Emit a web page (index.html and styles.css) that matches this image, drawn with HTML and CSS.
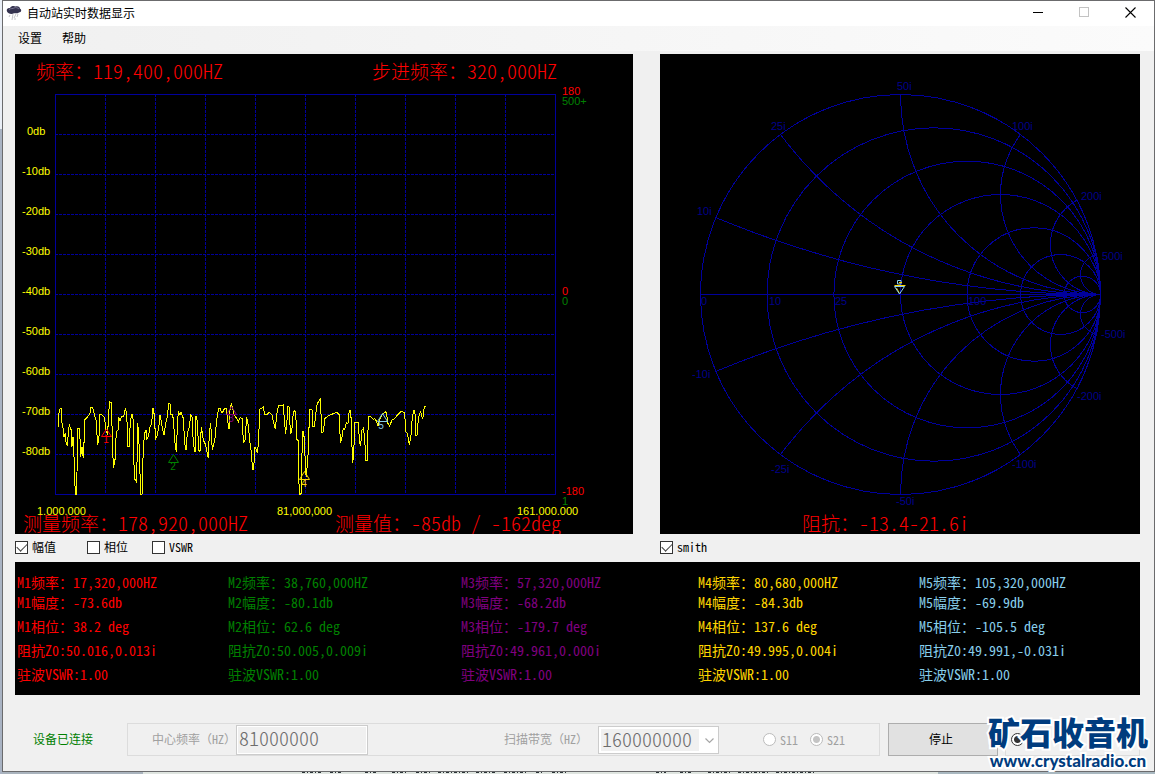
FILE: index.html
```html
<!DOCTYPE html>
<html lang="zh-CN">
<head>
<meta charset="utf-8">
<title>自动站实时数据显示</title>
<link rel="stylesheet" href="styles.css">
</head>
<body>
<main class="window">
  <header class="titlebar">
    <svg class="app-icon" width="16" height="16" viewBox="0 0 16 16" aria-hidden="true">
      <path d="M1 6.5C0 4 2 2.500 4 3C5 1 8 .6 9.500 1.600C12 .8 14 2 14 3.800C16 4.500 15.500 7.500 13 7.500C11 9 9 8 8 8.200C6 9.500 2 9 1 6.500Z" fill="#34324f"/>
      <path d="M3 4.500C5 3 7 4 8 3C10 2 12 3 13 4" fill="none" stroke="#77758f"/>
      <path d="M4 10l-1 2M7 9l-1 6M10 9l-2 4M12 9l-1 3M9 13v2" stroke="#c3c3c8" fill="none"/>
    </svg>
    <h1 class="title">自动站实时数据显示</h1>
    <div class="caption-buttons">
      <button type="button" class="caption" aria-label="最小化"><svg width="11" height="11"><path d="M0 5.500H10" stroke="#000"/></svg></button>
      <button type="button" class="caption" aria-label="最大化" disabled><svg width="11" height="11"><rect x=".5" y=".5" width="9" height="9" fill="none" stroke="#c3c3c3"/></svg></button>
      <button type="button" class="caption" aria-label="关闭"><svg width="11" height="11"><path d="M.5 .5L10.500 10.500M10.500 .5L.5 10.500" stroke="#000" stroke-width="1.100"/></svg></button>
    </div>
  </header>
  <nav class="menubar">
    <button type="button" class="menu">设置</button>
    <button type="button" class="menu">帮助</button>
  </nav>

  <div class="content">
    <section class="charts">
      <svg class="chart" viewBox="15 54 618 480" role="img" aria-label="频率响应">
        <g class="grid dashed">
          <path d="M105.500 94V494M155.500 94V494M205.500 94V494M255.500 94V494M305.500 94V494M355.500 94V494M405.500 94V494M455.500 94V494M505.500 94V494"/>
          <path d="M55 134.500H555M55 174.500H555M55 214.500H555M55 254.500H555M55 294.500H555M55 334.500H555M55 374.500H555M55 414.500H555M55 454.500H555"/>
        </g>
        <rect class="grid" x="55.500" y="94.500" width="500" height="400"/>
        <g class="axis yellow">
          <text x="27" y="135">0db</text>
          <text x="22" y="175">-10db</text>
          <text x="22" y="215">-20db</text>
          <text x="22" y="255">-30db</text>
          <text x="22" y="295">-40db</text>
          <text x="22" y="335">-50db</text>
          <text x="22" y="375">-60db</text>
          <text x="22" y="415">-70db</text>
          <text x="22" y="455">-80db</text>
          <text x="37" y="515">1.000.000</text>
          <text x="277" y="515">81,000,000</text>
          <text x="517" y="515">161.000.000</text>
        </g>
        <g class="axis red">
          <text x="562" y="95">180</text>
          <text x="562" y="295">0</text>
          <text x="562" y="495">-180</text>
        </g>
        <g class="axis green">
          <text x="562" y="105">500+</text>
          <text x="562" y="305">0</text>
          <text x="562" y="505">1</text>
        </g>
        <g class="trace" transform="translate(0 380) scale(.33333)">
          <polyline points="175,140 177,100 180,87 183,85 186,130 190,150 191,172 196,160 198,185 202,197 205,160 208,132 212,148 215,150 216,200 219,170 221,200 223,260 226,343 230,343 233,145 239,147 242,230 246,200 250,235 252,190 254,120 262,112 270,100 273,82 278,82 282,100 288,120 293,195 297,170 300,103 304,103 308,108 314,112 317,150 322,160 325,130 328,65 334,68 337,170 340,265 345,240 349,155 354,150 356,110 360,122 366,108 371,110 376,87 380,100 384,200 388,200 391,120 396,103 399,115 403,300 407,300 410,310 413,130 416,160 422,343 426,343 430,200 434,160 438,150 440,180 446,165 450,140 455,130 459,85 462,100 467,175 472,165 477,135 480,105 484,125 488,150 492,165 497,130 502,110 506,72 510,72 513,105 518,103 521,130 525,190 529,217 532,140 535,95 540,105 543,97 550,115 554,190 558,210 562,160 568,140 572,105 576,110 580,190 585,217 588,108 592,125 596,210 600,215 604,140 610,180 617,195 625,235 628,160 632,130 637,210 645,175 650,120 656,85 660,85"/>
          <polyline points="660,85 666,100 674,85 679,85 684,130 687,148 690,90 694,72 698,85 703,105 710,115 715,125 720,113 727,115 730,190 735,180 740,112 745,135 749,180 753,210 758,268 761,268 765,200 773,220 777,150 779,88 784,85 790,80 794,103 802,103 808,97 816,105 820,125 826,148 830,105 835,78 850,75 853,120 857,162 861,120 864,80 868,82 871,160 875,158 880,95 885,92 888,120 891,180 894,180 896,295 899,343 903,343 906,220 909,152 913,175 917,280 919,290 923,240 926,200 928,90 936,90 939,140 943,140 947,105 951,75 955,65 961,57 963,100 966,158 970,155 975,115 985,108 995,103 1010,97 1018,105 1021,190 1026,170 1030,145 1034,148 1039,128 1044,130 1048,90 1052,92 1055,150 1057,248 1061,230 1064,128 1076,128 1078,190 1082,195 1086,150 1090,145 1094,170 1097,243 1102,243 1105,108 1112,110 1120,118 1124,115 1130,125 1134,138 1138,122 1144,108 1150,100 1158,95 1161,112 1164,130 1169,138 1176,120 1182,118 1190,108 1198,100 1204,93 1210,97 1214,98 1217,155 1222,160 1228,195 1233,165 1237,110 1242,90 1246,105 1248,168 1252,165 1255,112 1262,95 1268,118 1271,100 1273,78 1277,80"/>
        </g>
        <g class="marker red"><path d="M101.500 436.500H111.500L106.500 429Z"/><text x="106" y="443">1</text></g>
        <g class="marker green"><path d="M168.500 462.500H178.500L173.500 454.500Z"/><text x="173" y="470">2</text></g>
        <g class="marker purple"><path d="M226.500 414.500H236.500L231.500 406.500Z"/><text x="231" y="422">3</text></g>
        <g class="marker gold"><path d="M299.500 479.500H309.500L304.500 471.500Z"/><text x="304" y="487">4</text></g>
        <g class="marker sky"><path d="M377.500 421.500H387.500L382.500 413.500Z"/><text x="381" y="429">5</text></g>
        <g class="readout">
          <text x="36" y="79">频率：<tspan class="lat">119,400,000HZ</tspan></text>
          <text x="372" y="79">步进频率：<tspan class="lat">320,000HZ</tspan></text>
          <text x="23" y="531">测量频率：<tspan class="lat">178,920,000HZ</tspan></text>
          <text x="335" y="531">测量值：<tspan class="lat">-85db / -162deg</tspan></text>
        </g>
      </svg>

      <svg class="chart" viewBox="660 54 480 480" role="img" aria-label="史密斯圆图">
        <defs><clipPath id="unit"><circle cx="900.500" cy="294.500" r="200.500"/></clipPath></defs>
        <g class="grid">
          <circle cx="900.500" cy="294.500" r="200"/>
          <path d="M700 294.500H1100"/>
          <circle cx="933.800" cy="294.500" r="166.700"/>
          <circle cx="967.200" cy="294.500" r="133.300"/>
          <circle cx="1000.500" cy="294.500" r="100"/>
          <circle cx="1033.800" cy="294.500" r="66.700"/>
          <circle cx="1060.500" cy="294.500" r="40"/>
          <circle cx="1082.300" cy="294.500" r="18.200"/>
        </g>
        <g class="grid" clip-path="url(#unit)">
          <circle cx="1100.500" cy="-705.500" r="1000"/>
          <circle cx="1100.500" cy="-105.500" r="400"/>
          <circle cx="1100.500" cy="94.500" r="200"/>
          <circle cx="1100.500" cy="194.500" r="100"/>
          <circle cx="1100.500" cy="244.500" r="50"/>
          <circle cx="1100.500" cy="274.500" r="20"/>
          <circle cx="1100.500" cy="1294.500" r="1000"/>
          <circle cx="1100.500" cy="694.500" r="400"/>
          <circle cx="1100.500" cy="494.500" r="200"/>
          <circle cx="1100.500" cy="394.500" r="100"/>
          <circle cx="1100.500" cy="344.500" r="50"/>
          <circle cx="1100.500" cy="314.500" r="20"/>
        </g>
        <g class="axis navy">
          <text x="897" y="90">50i</text>
          <text x="771" y="130">25i</text>
          <text x="697" y="215">10i</text>
          <text x="701" y="305">0</text>
          <text x="769" y="305">10</text>
          <text x="835" y="305">25</text>
          <text x="968" y="305">100</text>
          <text x="1012" y="130">100i</text>
          <text x="1081" y="200">200i</text>
          <text x="1102" y="260">500i</text>
          <text x="1101" y="338">-500i</text>
          <text x="1077" y="400">-200i</text>
          <text x="1012" y="468">-100i</text>
          <text x="896" y="505">-50i</text>
          <text x="771" y="473">-25i</text>
          <text x="692" y="378">-10i</text>
        </g>
        <g class="marker">
          <path class="gold" d="M894.500 285.500H905.500M896.500 288L899.500 293.500"/>
          <path class="sky" d="M894.500 286.500H904.500L899.500 294Z"/>
          <path class="sky" d="M897.500 284V280.500H901V284Z"/>
          <path class="gold" d="M899 282.500H902"/>
        </g>
        <g class="readout"><text x="802" y="531">阻抗：<tspan class="lat">-13.4-21.6i</tspan></text></g>
      </svg>
    </section>

    <section class="toggles">
      <div class="traces">
        <label class="check"><input type="checkbox" checked>幅值</label>
        <label class="check"><input type="checkbox">相位</label>
        <label class="check"><input type="checkbox">VSWR</label>
      </div>
      <label class="check"><input type="checkbox" checked>smith</label>
    </section>

    <section class="readings">
      <ul class="reading red"><li>M1频率：17,320,000HZ</li><li>M1幅度：-73.6db</li><li>M1相位：38.2 deg</li><li>阻抗Z0:50.016,0.013i</li><li>驻波VSWR:1.00</li></ul>
      <ul class="reading green"><li>M2频率：38,760,000HZ</li><li>M2幅度：-80.1db</li><li>M2相位：62.6 deg</li><li>阻抗Z0:50.005,0.009i</li><li>驻波VSWR:1.00</li></ul>
      <ul class="reading purple"><li>M3频率：57,320,000HZ</li><li>M3幅度：-68.2db</li><li>M3相位：-179.7 deg</li><li>阻抗Z0:49.961,0.000i</li><li>驻波VSWR:1.00</li></ul>
      <ul class="reading gold"><li>M4频率：80,680,000HZ</li><li>M4幅度：-84.3db</li><li>M4相位：137.6 deg</li><li>阻抗Z0:49.995,0.004i</li><li>驻波VSWR:1.00</li></ul>
      <ul class="reading sky"><li>M5频率：105,320,000HZ</li><li>M5幅度：-69.9db</li><li>M5相位：-105.5 deg</li><li>阻抗Z0:49.991,-0.031i</li><li>驻波VSWR:1.00</li></ul>
    </section>

    <section class="controls">
      <p class="status">设备已连接</p>
      <div class="group settings">
        <label class="caption-text" for="center">中心频率（<span class="unit">HZ</span>）</label>
        <input class="center" id="center" type="text" value="81000000" disabled>
        <div class="span-field">
          <label class="caption-text" for="span">扫描带宽（<span class="unit">HZ</span>）</label>
          <span class="select-box">
            <select id="span" disabled><option>160000000</option></select>
            <svg class="chevron" width="9" height="6" aria-hidden="true"><path d="M.5 .5L4.500 4.500L8.500 .5" fill="none" stroke="#a6a6a6" stroke-width="1.200"/></svg>
          </span>
        </div>
        <div class="ports">
          <label class="radio"><input type="radio" name="port" disabled>S11</label>
          <label class="radio"><input type="radio" name="port" checked disabled>S21</label>
        </div>
      </div>
      <button type="button" class="stop">停止</button>
      <div class="group mode">
        <input type="radio" name="mode" aria-label="模式一" checked>
      </div>
    </section>
  </div>

  <div class="watermark">
    <strong class="mark-name">矿石收音机</strong>
    <span class="mark-url">www.crystalradio.cn</span>
  </div>
</main>
<div class="behind">
  <svg width="520" height="2" aria-hidden="true"><path d="M2 .5H22M30 .5H42M65 .5H78M92 .5H108M116 .5H132M138 .5H170M176 .5H196M204 .5H228M236 .5H242M252 .5H268M356 .5H366M380 .5H392M408 .5H432M438 .5H470M476 .5H516" stroke="#2c3438" stroke-dasharray="3 2 1 2"/></svg>
</div>
</body>
</html>
```
FILE: styles.css
```css
* { box-sizing: border-box; }

body {
  margin: 0;
  padding-left: 2px;
  background: linear-gradient(#e9eef6 0 129px, #a9b3c3 129px);
  font: 12px/16px "Noto Sans CJK SC", sans-serif;
  font-feature-settings: "hwid";
  color: #000;
}

button, input, select {
  font: inherit;
  font-feature-settings: inherit;
  color: inherit;
  margin: 0;
}

.window {
  position: relative;
  border: 1px solid #6b6b6d;
  background: #f0f0f0;
}

.titlebar {
  display: flex;
  align-items: center;
  height: 25px;
  padding: 0 1px 2px 3px;
  gap: 5px;
  background: #fff;
}

.title {
  flex: 1;
  margin: 0;
  font-size: 12px;
  font-weight: 400;
}

.caption-buttons { display: flex; }

.caption {
  display: flex;
  align-items: center;
  justify-content: center;
  width: 46px;
  height: 23px;
  padding: 0;
  border: 0;
  background: none;
}

.menubar {
  display: flex;
  gap: 4px;
  height: 25px;
  padding: 0 0 2px 7px;
  background: linear-gradient(90deg, #f0f0f0, #fbfbfb);
}

.menu {
  padding: 0 8px;
  border: 0;
  background: none;
}

.content { padding: 3px 14px 15px 12px; }

.charts, .toggles {
  display: grid;
  grid-template-columns: 618fr 480fr;
  column-gap: 27px;
}

.chart {
  display: block;
  width: 100%;
  background: #000;
}

.grid {
  fill: none;
  stroke: #00009c;
  shape-rendering: crispEdges;
}

.dashed { stroke-dasharray: 3 1; }

.axis { font: 11px "Liberation Sans", sans-serif; }

.readout {
  font-size: 19px;
  font-weight: 300;
  fill: #f00;
}

.lat { font-size: 20px; }

.trace {
  fill: none;
  stroke: #ff0;
  shape-rendering: crispEdges;
}

.trace polyline { vector-effect: non-scaling-stroke; }

.marker text {
  font: 10px "Liberation Sans", sans-serif;
  text-anchor: middle;
}

.marker path { fill: none; stroke: currentColor; }

.red { color: #f00; }
.green { color: #008000; }
.purple { color: #800080; }
.gold { color: #ffd700; }
.sky { color: #87ceeb; }
.yellow { color: #ff0; }
.navy { color: #00008b; }
.axis, .marker text { fill: currentColor; }

.toggles {
  height: 28px;
  padding-bottom: 2px;
  align-items: center;
}

.traces {
  display: grid;
  grid-template-columns: 72px 65px auto;
}

.check, .radio {
  display: flex;
  align-items: center;
  gap: 4px;
}

.check input {
  appearance: none;
  width: 13px;
  height: 13px;
  border: 1px solid #333;
  background: #fff;
}

.check input:checked {
  display: grid;
  place-items: center;
}

.check input:checked::before {
  content: "";
  width: 9px;
  height: 5px;
  margin-bottom: 3px;
  border: solid #444;
  border-width: 0 0 1px 1px;
  rotate: -45deg;
}

.readings {
  display: grid;
  grid-template-columns: 211fr 233fr 237fr 221fr 221fr;
  padding: 12px 0 9px 2px;
  background: #000;
  font-size: 14px;
  line-height: 24px;
}

.reading {
  margin: 0;
  padding: 0;
  list-style: none;
  white-space: nowrap;
}

.reading li:first-child { line-height: 16px; }

.controls {
  display: flex;
  align-items: center;
  margin-top: 28px;
}

.status {
  margin: 0;
  padding: 0 34px 2px 18px;
  color: #008000;
}

.group {
  display: flex;
  align-items: center;
  height: 33px;
  border: 1px solid #dcdcdc;
}

.settings {
  flex: 0 1 753px;
  padding: 0 34px 0 24px;
}

.caption-text {
  padding-bottom: 2px;
  font-feature-settings: normal;
  color: #a0a0a0;
  white-space: nowrap;
}

.unit { font-feature-settings: "hwid"; }

.center {
  width: 132px;
  height: 30px;
  padding: 0 2px 4px;
  border: 1px solid #ccc;
  outline: 1px solid #fff;
  outline-offset: -2px;
  background: #f0f0f0;
  font-size: 20px;
  font-weight: 300;
  color: #6d6d6d;
}

.span-field {
  display: flex;
  align-items: center;
  gap: 10px;
  margin-left: auto;
}

.select-box { position: relative; display: flex; }

.select-box select {
  appearance: none;
  width: 121px;
  height: 28px;
  padding: 0 0 2px 3px;
  border: 1px solid #ccc;
  border-radius: 0;
  background: linear-gradient(#f0f0f0, #f0f0f0) 2px 2px / 98px 22px no-repeat #fff;
  font-size: 20px;
  font-weight: 300;
  color: #6d6d6d;
  opacity: 1;
}

.chevron { position: absolute; right: 5px; top: 12px; }

.ports {
  display: flex;
  gap: 12px;
  margin-left: 44px;
  color: #a0a0a0;
}

input[type="radio"] {
  appearance: none;
  width: 13px;
  height: 13px;
  border: 1px solid #333;
  border-radius: 50%;
  background: #fff;
}

input[type="radio"]:checked {
  background: radial-gradient(#333 0 3px, #fff 4px);
}

input[type="radio"]:disabled { border-color: #bcbcbc; }

input[type="radio"]:disabled:checked {
  background: radial-gradient(#c4c4c4 0 3px, #fff 4px);
}

.stop {
  flex: 0 1 110px;
  height: 33px;
  margin: 0 7px 0 8px;
  padding: 0 4px 2px 0;
  border: 1px solid #adadad;
  background: #e1e1e1;
}

.mode { flex: 1; padding-left: 5px; }

.watermark {
  position: absolute;
  right: 6px;
  bottom: 0;
  display: grid;
  justify-items: center;
  row-gap: 4px;
  color: #003c7e;
  -webkit-text-stroke: 4px #fff;
  paint-order: stroke fill;
  pointer-events: none;
}

.mark-name {
  font-size: 32px;
  line-height: 32px;
  font-weight: 900;
}

.mark-url {
  font: 900 17px/20px Lato, sans-serif;
}

.behind {
  height: 2px;
  padding-left: 298px;
  overflow: hidden;
  background: linear-gradient(90deg, #a9b3bd 141px, #dfe5e0 141px 936px, #a9b8c0 936px);
}

.behind svg { display: block; }
```
